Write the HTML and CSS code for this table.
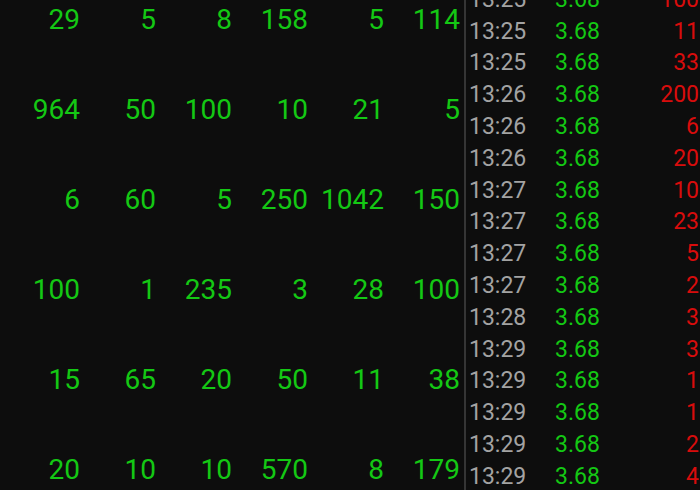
FILE: index.html
```html
<!DOCTYPE html>
<html>
<head>
<meta charset="utf-8">
<link rel="stylesheet" href="styles.css">
</head>
<body>
<div class="screen">
  <div class="orders">
    <div class="orow"><span>29</span><span>5</span><span>8</span><span>158</span><span>5</span><span>114</span></div>
    <div class="orow"><span>964</span><span>50</span><span>100</span><span>10</span><span>21</span><span>5</span></div>
    <div class="orow"><span>6</span><span>60</span><span>5</span><span>250</span><span>1042</span><span>150</span></div>
    <div class="orow"><span>100</span><span>1</span><span>235</span><span>3</span><span>28</span><span>100</span></div>
    <div class="orow"><span>15</span><span>65</span><span>20</span><span>50</span><span>11</span><span>38</span></div>
    <div class="orow"><span>20</span><span>10</span><span>10</span><span>570</span><span>8</span><span>179</span></div>
  </div>
  <div class="ticks">
    <div class="tick"><span class="time">13:25</span><span class="price">3.68</span><span class="vol">100</span></div>
    <div class="tick"><span class="time">13:25</span><span class="price">3.68</span><span class="vol">11</span></div>
    <div class="tick"><span class="time">13:25</span><span class="price">3.68</span><span class="vol">33</span></div>
    <div class="tick"><span class="time">13:26</span><span class="price">3.68</span><span class="vol">200</span></div>
    <div class="tick"><span class="time">13:26</span><span class="price">3.68</span><span class="vol">6</span></div>
    <div class="tick"><span class="time">13:26</span><span class="price">3.68</span><span class="vol">20</span></div>
    <div class="tick"><span class="time">13:27</span><span class="price">3.68</span><span class="vol">10</span></div>
    <div class="tick"><span class="time">13:27</span><span class="price">3.68</span><span class="vol">23</span></div>
    <div class="tick"><span class="time">13:27</span><span class="price">3.68</span><span class="vol">5</span></div>
    <div class="tick"><span class="time">13:27</span><span class="price">3.68</span><span class="vol">2</span></div>
    <div class="tick"><span class="time">13:28</span><span class="price">3.68</span><span class="vol">3</span></div>
    <div class="tick"><span class="time">13:29</span><span class="price">3.68</span><span class="vol">3</span></div>
    <div class="tick"><span class="time">13:29</span><span class="price">3.68</span><span class="vol">1</span></div>
    <div class="tick"><span class="time">13:29</span><span class="price">3.68</span><span class="vol">1</span></div>
    <div class="tick"><span class="time">13:29</span><span class="price">3.68</span><span class="vol">2</span></div>
    <div class="tick"><span class="time">13:29</span><span class="price">3.68</span><span class="vol">4</span></div>
  </div>
</div>
</body>
</html>
```
FILE: styles.css
```css
html, body {
  margin: 0;
  padding: 0;
  background: #0d0d0d;
  overflow: hidden;
}
body {
  width: 700px;
  height: 490px;
  font-family: Roboto, "Noto Sans", sans-serif;
}
.screen {
  display: flex;
  height: 490px;
  overflow: hidden;
}
.orders {
  width: 466px;
  flex: none;
  box-sizing: border-box;
  padding-left: 5px;
  border-right: 2px solid #353535;
  margin-top: -26px;
}
.orow {
  display: grid;
  grid-template-columns: repeat(6, 76px);
  height: 90px;
  align-items: center;
  color: #14c814;
  font-size: 28px;
}
.orow span {
  text-align: right;
  padding-right: 1px;
}
.ticks {
  flex: 1;
  margin-top: -16.5px;
}
.tick {
  display: flex;
  align-items: center;
  height: 31.8px;
  font-size: 23px;
  padding-left: 3px;
  padding-right: 1px;
}
.time {
  width: 86px;
  color: #a3a3a3;
}
.price {
  color: #14c814;
}
.vol {
  margin-left: auto;
  color: #d80c0c;
}
```
